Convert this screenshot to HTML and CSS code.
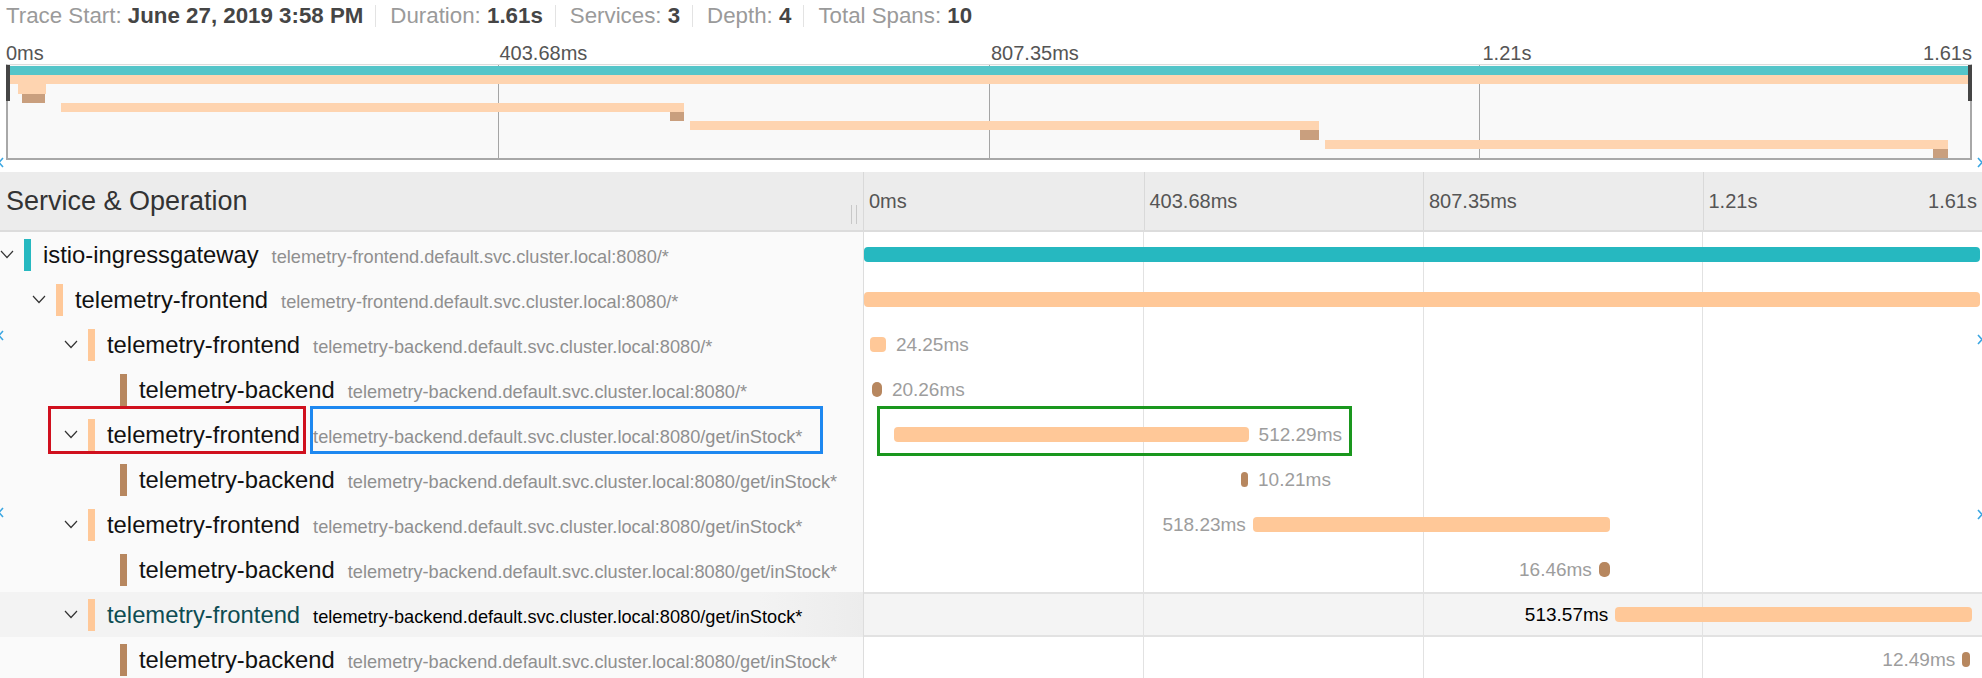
FILE: index.html
```html
<!DOCTYPE html>
<html lang="en">
<head>
<meta charset="utf-8">
<title>Trace Detail</title>
<link rel="stylesheet" href="styles.css">
</head>
<body>
<div class="page">
  <header class="summary">
    <span class="item">Trace Start: <b>June 27, 2019 3:58 PM</b></span>
    <span class="sep"></span>
    <span class="item">Duration: <b>1.61s</b></span>
    <span class="sep"></span>
    <span class="item">Services: <b>3</b></span>
    <span class="sep"></span>
    <span class="item">Depth: <b>4</b></span>
    <span class="sep"></span>
    <span class="item">Total Spans: <b>10</b></span>
  </header>

  <section class="minimap">
    <div class="mini-ticks">
      <div class="mt first">0ms</div>
      <div class="mt">403.68ms</div>
      <div class="mt">807.35ms</div>
      <div class="mt last"><span>1.21s</span><span>1.61s</span></div>
    </div>
    <div class="mini-canvas">
      <div class="mini-row"><div class="mb teal" style="margin-left:0%;width:100%"></div></div>
      <div class="mini-row"><div class="mb peach" style="margin-left:0%;width:100%"></div></div>
      <div class="mini-row"><div class="mb peach" style="margin-left:0.5%;width:1.45%"></div></div>
      <div class="mini-row"><div class="mb brown" style="margin-left:0.7%;width:1.2%"></div></div>
      <div class="mini-row"><div class="mb peach" style="margin-left:2.7%;width:31.73%"></div></div>
      <div class="mini-row"><div class="mb brown" style="margin-left:33.75%;width:0.7%"></div></div>
      <div class="mini-row"><div class="mb peach" style="margin-left:34.74%;width:32.09%"></div></div>
      <div class="mini-row"><div class="mb brown" style="margin-left:65.85%;width:0.95%"></div></div>
      <div class="mini-row"><div class="mb peach" style="margin-left:67.1%;width:31.8%"></div></div>
      <div class="mini-row"><div class="mb brown" style="margin-left:98.1%;width:0.77%"></div></div>
      <span class="handle left"></span>
      <span class="handle right"></span>
    </div>
  </section>

  <section class="table">
    <div class="thead">
      <div class="name-col">
        <span class="thead-title">Service &amp; Operation</span>
        <span class="resizer"></span>
      </div>
      <div class="tl-col ticks">
        <div class="tick">0ms</div>
        <div class="tick">403.68ms</div>
        <div class="tick">807.35ms</div>
        <div class="tick last"><span>1.21s</span><span>1.61s</span></div>
      </div>
    </div>

    <div class="row">
      <div class="name-col lv0">
        <span class="chev"><svg width="14" height="9" viewBox="0 0 14 9"><polyline points="1,1 7,7.5 13,1" /></svg></span>
        <span class="svc-bar teal"></span>
        <span class="label"><span class="svc">istio-ingressgateway</span><span class="op">telemetry-frontend.default.svc.cluster.local:8080/*</span></span>
      </div>
      <div class="tl-col"><div class="track"><div class="bar teal" style="margin-left:0%;width:99.8%"></div></div></div>
    </div>

    <div class="row">
      <div class="name-col lv1">
        <span class="chev"><svg width="14" height="9" viewBox="0 0 14 9"><polyline points="1,1 7,7.5 13,1" /></svg></span>
        <span class="svc-bar peach"></span>
        <span class="label"><span class="svc">telemetry-frontend</span><span class="op">telemetry-frontend.default.svc.cluster.local:8080/*</span></span>
      </div>
      <div class="tl-col"><div class="track"><div class="bar peach" style="margin-left:0%;width:99.8%"></div></div></div>
    </div>

    <div class="row">
      <div class="name-col lv2">
        <span class="chev"><svg width="14" height="9" viewBox="0 0 14 9"><polyline points="1,1 7,7.5 13,1" /></svg></span>
        <span class="svc-bar peach"></span>
        <span class="label"><span class="svc">telemetry-frontend</span><span class="op">telemetry-backend.default.svc.cluster.local:8080/*</span></span>
      </div>
      <div class="tl-col"><div class="track"><div class="bar peach" style="margin-left:0.56%;width:1.4%"></div><span class="dur">24.25ms</span></div></div>
    </div>

    <div class="row">
      <div class="name-col lv3">
        <span class="chev"></span>
        <span class="svc-bar brown"></span>
        <span class="label"><span class="svc">telemetry-backend</span><span class="op">telemetry-backend.default.svc.cluster.local:8080/*</span></span>
      </div>
      <div class="tl-col"><div class="track"><div class="bar brown" style="margin-left:0.75%;width:0.85%"></div><span class="dur">20.26ms</span></div></div>
    </div>

    <div class="row marked">
      <div class="name-col lv2">
        <span class="chev"><svg width="14" height="9" viewBox="0 0 14 9"><polyline points="1,1 7,7.5 13,1" /></svg></span>
        <span class="svc-bar peach"></span>
        <span class="label"><span class="svc">telemetry-frontend</span><span class="op">telemetry-backend.default.svc.cluster.local:8080/get/inStock*</span></span>
        <span class="note red"></span>
        <span class="note blue"></span>
      </div>
      <div class="tl-col"><div class="track"><div class="bar peach" style="margin-left:2.7%;width:31.7%"></div><span class="dur">512.29ms</span></div>
        <span class="note green"></span>
      </div>
    </div>

    <div class="row">
      <div class="name-col lv3">
        <span class="chev"></span>
        <span class="svc-bar brown"></span>
        <span class="label"><span class="svc">telemetry-backend</span><span class="op">telemetry-backend.default.svc.cluster.local:8080/get/inStock*</span></span>
      </div>
      <div class="tl-col"><div class="track"><div class="bar brown" style="margin-left:33.75%;width:0.6%"></div><span class="dur">10.21ms</span></div></div>
    </div>

    <div class="row">
      <div class="name-col lv2">
        <span class="chev"><svg width="14" height="9" viewBox="0 0 14 9"><polyline points="1,1 7,7.5 13,1" /></svg></span>
        <span class="svc-bar peach"></span>
        <span class="label"><span class="svc">telemetry-frontend</span><span class="op">telemetry-backend.default.svc.cluster.local:8080/get/inStock*</span></span>
      </div>
      <div class="tl-col"><div class="track end"><span class="dur">518.23ms</span><div class="bar peach" style="margin-right:33.27%;width:31.95%"></div></div></div>
    </div>

    <div class="row">
      <div class="name-col lv3">
        <span class="chev"></span>
        <span class="svc-bar brown"></span>
        <span class="label"><span class="svc">telemetry-backend</span><span class="op">telemetry-backend.default.svc.cluster.local:8080/get/inStock*</span></span>
      </div>
      <div class="tl-col"><div class="track end"><span class="dur">16.46ms</span><div class="bar brown" style="margin-right:33.27%;width:1.0%"></div></div></div>
    </div>

    <div class="row active">
      <div class="name-col lv2">
        <span class="chev"><svg width="14" height="9" viewBox="0 0 14 9"><polyline points="1,1 7,7.5 13,1" /></svg></span>
        <span class="svc-bar peach"></span>
        <span class="label"><span class="svc">telemetry-frontend</span><span class="op">telemetry-backend.default.svc.cluster.local:8080/get/inStock*</span></span>
      </div>
      <div class="tl-col"><div class="track end"><span class="dur">513.57ms</span><div class="bar peach" style="margin-right:0.9%;width:31.9%"></div></div></div>
    </div>

    <div class="row">
      <div class="name-col lv3">
        <span class="chev"></span>
        <span class="svc-bar brown"></span>
        <span class="label"><span class="svc">telemetry-backend</span><span class="op">telemetry-backend.default.svc.cluster.local:8080/get/inStock*</span></span>
      </div>
      <div class="tl-col"><div class="track end"><span class="dur">12.49ms</span><div class="bar brown" style="margin-right:1.07%;width:0.7%"></div></div></div>
    </div>
  </section>

  <svg class="edge-mark l1" width="6" height="11" viewBox="0 0 6 11"><polyline points="5,1 1,5.5 5,10" /></svg>
  <svg class="edge-mark r1" width="6" height="11" viewBox="0 0 6 11"><polyline points="1,1 5,5.5 1,10" /></svg>
  <svg class="edge-mark l2" width="6" height="11" viewBox="0 0 6 11"><polyline points="5,1 1,5.5 5,10" /></svg>
  <svg class="edge-mark r2" width="6" height="11" viewBox="0 0 6 11"><polyline points="1,1 5,5.5 1,10" /></svg>
  <svg class="edge-mark l3" width="6" height="11" viewBox="0 0 6 11"><polyline points="5,1 1,5.5 5,10" /></svg>
  <svg class="edge-mark r3" width="6" height="11" viewBox="0 0 6 11"><polyline points="1,1 5,5.5 1,10" /></svg>
</div>
</body>
</html>
```

FILE: styles.css
```css
* { box-sizing: border-box; }

html, body {
  margin: 0;
  padding: 0;
  height: 100%;
  overflow: hidden;
  background: #ffffff;
}

body {
  font-family: "Liberation Sans", Arial, sans-serif;
}

.page {
  position: relative;
  width: 1982px;
  height: 678px;
  overflow: hidden;
}

/* ---------- summary header ---------- */
.summary {
  display: flex;
  align-items: center;
  height: 32px;
  padding-left: 6px;
  font-size: 22.3px;
  color: #9a9a9a;
  white-space: nowrap;
}
.summary b { color: #454545; font-weight: bold; }
.summary .sep {
  width: 1px;
  height: 22px;
  background: #e3e3e3;
  margin: 0 14px 0 12px;
}

/* ---------- minimap ---------- */
.minimap {
  padding: 0 10px 0 6px;
}
.mini-ticks {
  display: grid;
  grid-template-columns: repeat(4, 1fr);
  height: 32px;
  padding-top: 11px;
  font-size: 20px;
  line-height: 20px;
  color: #555;
}
.mini-ticks .mt { padding-left: 2px; }
.mini-ticks .mt.first { padding-left: 0; }
.mini-ticks .mt.last {
  display: flex;
  justify-content: space-between;
}

.mini-canvas {
  position: relative;
  height: 96px;
  display: flex;
  flex-direction: column;
  background-color: #f9f9f9;
  background-image:
    linear-gradient(#a5a5a5, #a5a5a5),
    linear-gradient(#a5a5a5, #a5a5a5),
    linear-gradient(#a5a5a5, #a5a5a5);
  background-size: 1px 100%;
  background-repeat: no-repeat;
  background-position: 25% 0, 50% 0, 75% 0;
  border: 2px solid #a8a8a8;
  border-top: 1px solid #dcdcdc;
  padding-top: 1px;
}
.mini-row {
  flex: 1;
  display: flex;
}
.mb { height: 100%; flex: none; }
.mb.teal { background: #54c5c9; }
.mb.peach { background: #fed4b0; }
.mb.brown { background: #c99f7e; }

.handle {
  position: absolute;
  top: 0;
  width: 4px;
  height: 36px;
  background: #454545;
}
.handle.left { left: -2px; }
.handle.right { right: -2px; }

/* ---------- table ---------- */
.table {
  margin-top: 12px;
}

.thead {
  display: flex;
  height: 60px;
  background: #ececec;
  border-bottom: 2px solid #dcdcdc;
}
.thead .name-col {
  width: 863px;
  flex: none;
  display: flex;
  align-items: center;
  padding-left: 6px;
  font-size: 27px;
  color: #333;
}
.resizer {
  margin-left: auto;
  margin-right: 6px;
  align-self: flex-end;
  margin-bottom: 6px;
  width: 6px;
  height: 19px;
  border-left: 1px solid #c8c8c8;
  border-right: 1px solid #c8c8c8;
}
.thead .ticks {
  flex: 1;
  display: grid;
  grid-template-columns: repeat(4, 1fr);
  border-left: 1px solid #d9d9d9;
  font-size: 20px;
  color: #555;
}
.tick {
  display: flex;
  align-items: center;
  padding-left: 5px;
  border-left: 1px solid #d9d9d9;
}
.tick:first-child { border-left: none; }
.tick.last {
  justify-content: space-between;
  padding-right: 5px;
}

.row {
  display: flex;
  height: 45px;
}
.row .name-col {
  position: relative;
  width: 863px;
  flex: none;
  display: flex;
  align-items: center;
  background: #fafafa;
}
.lv0 { padding-left: 0; }
.lv1 { padding-left: 32px; }
.lv2 { padding-left: 64px; }
.lv3 { padding-left: 96px; }

.chev {
  width: 24px;
  flex: none;
  display: flex;
  align-items: center;
}
.chev svg polyline {
  fill: none;
  stroke: #333;
  stroke-width: 1.2;
}
.svc-bar {
  width: 7px;
  height: 32px;
  flex: none;
  margin-right: 12px;
}
.svc-bar.teal { background: #26b8c0; }
.svc-bar.peach { background: #ffc898; }
.svc-bar.brown { background: #b7875f; }

.label {
  display: flex;
  align-items: baseline;
  white-space: nowrap;
}
.svc {
  font-size: 23.8px;
  color: #111;
}
.op {
  font-size: 18.2px;
  color: #8f8f8f;
  margin-left: 13px;
}

.row .tl-col {
  position: relative;
  flex: 1;
  display: flex;
  align-items: center;
  border-left: 1px solid #dddddd;
  background-image:
    linear-gradient(#e2e2e2, #e2e2e2),
    linear-gradient(#e2e2e2, #e2e2e2),
    linear-gradient(#e2e2e2, #e2e2e2);
  background-size: 1px 100%;
  background-repeat: no-repeat;
  background-position: 25% 0, 50% 0, 75% 0;
}
.track {
  width: 100%;
  display: flex;
  align-items: center;
}
.track.end { justify-content: flex-end; }
.bar {
  height: 15px;
  border-radius: 4px;
  flex: none;
}
.bar.teal { background: #26b8c0; }
.bar.peach { background: #ffc898; }
.bar.brown { background: #b7875f; border-radius: 5px; }

.dur {
  font-size: 19px;
  color: #9d9d9d;
  margin-left: 10px;
  white-space: nowrap;
}
.track.end .dur {
  margin-left: 0;
  margin-right: 7px;
}

/* highlighted row */
.row.active .name-col {
  background: linear-gradient(to right, #f3f3f3 88%, #ececec);
}
.row.active .svc { color: #0d4c52; }
.row.active .op { color: #000; }
.row.active .tl-col {
  background-color: #f4f4f4;
  box-shadow: inset 0 2px 0 #e2e2e2, inset 0 -2px 0 #e2e2e2;
}
.row.active .dur { color: #000; }

/* annotation boxes */
.note {
  position: absolute;
  top: -6px;
  height: 50px;
  border: 3px solid;
  pointer-events: none;
}
.note.red { left: 48px; width: 258px; border-color: #d0101e; height: 48px; }
.note.blue { left: 310px; width: 513px; border-color: #1e88f0; height: 48px; }
.note.green { left: 13px; width: 475px; border-color: #1a971e; }

/* tiny edge markers */
.edge-mark {
  position: absolute;
}
.edge-mark polyline {
  fill: none;
  stroke: #3aa6e2;
  stroke-width: 1.6;
}
.edge-mark.l1 { left: -2px; top: 157px; }
.edge-mark.r1 { right: -1px; top: 157px; }
.edge-mark.l2 { left: -2px; top: 330px; }
.edge-mark.r2 { right: -1px; top: 334px; }
.edge-mark.l3 { left: -2px; top: 507px; }
.edge-mark.r3 { right: -1px; top: 509px; }
```
